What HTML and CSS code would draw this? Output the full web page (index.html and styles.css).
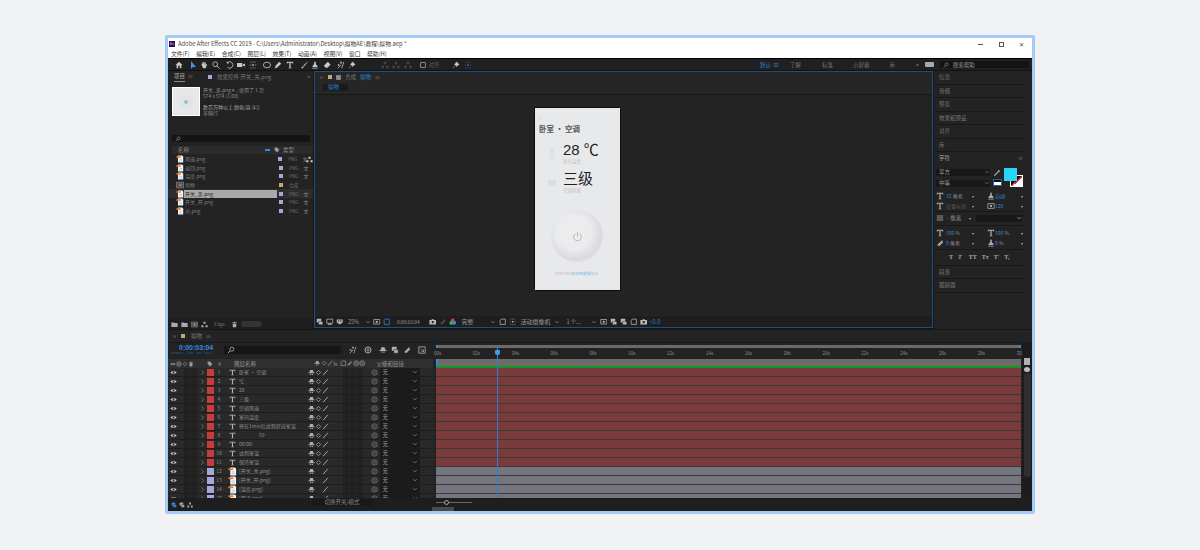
FILE: index.html
```html
<!DOCTYPE html>
<html lang="zh-CN">
<head>
  <meta charset="UTF-8" />
  <meta name="viewport" content="width=device-width, initial-scale=1.0" />
  <title>Adobe After Effects CC 2019</title>
  <link rel="stylesheet" href="styles.css">
</head>
<body>
  <svg class="defs" width="0" height="0">
    <symbol id="i-home" viewBox="0 0 10 10"><path d="M5 1 9.500 5H8v4H6V6H4v3H2V5H.5z" fill="currentColor"/></symbol>
    <symbol id="i-arrow" viewBox="0 0 10 10"><path d="M2.500 0v10l2.300-2.500h4z" fill="currentColor"/></symbol>
    <symbol id="i-hand" viewBox="0 0 10 10"><path d="M2 5V3l1 1V1.500h1V4l.5-3h1v3l.7-2.500h1L7 5l1-1h1L7 9H4z" fill="currentColor"/></symbol>
    <symbol id="i-zoom" viewBox="0 0 10 10"><circle cx="4" cy="4" r="3" fill="none" stroke="currentColor"/><path d="M6 6l3.500 3.500" stroke="currentColor"/></symbol>
    <symbol id="i-rotate" viewBox="0 0 10 10"><path d="M1.500 2.500A4 4 0 1 1 2 8" fill="none" stroke="currentColor"/><path d="M0 1h3v3z" fill="currentColor"/></symbol>
    <symbol id="i-cam" viewBox="0 0 10 10"><path d="M0 2.500h6.500v5H0zM7 4.500 10 3v4L7 5.500z" fill="currentColor"/></symbol>
    <symbol id="i-pan" viewBox="0 0 10 10"><path d="M2 1h1v1H2zM4.500 1h1v1h-1zM7 1h1v1H7zM1 4.500h1v1H1zM4 4h2v2H4zM8 4.500h1v1H8zM2 8h1v1H2zM4.500 8h1v1h-1zM7 8h1v1H7z" fill="currentColor"/></symbol>
    <symbol id="i-ellipse" viewBox="0 0 10 10"><ellipse cx="5" cy="5" rx="4.500" ry="3.500" fill="none" stroke="currentColor"/></symbol>
    <symbol id="i-pen" viewBox="0 0 10 10"><path d="M6.500 1 9 3.500 4 8 1 9l1-3z" fill="currentColor"/></symbol>
    <symbol id="i-t" viewBox="0 0 10 10"><path d="M1 1h8v2.200H8L7.600 2.200H5.800v6L7 8.600V9H3v-.4l1.200-.4v-6H2.400L2 3.200H1z" fill="currentColor"/></symbol>
    <symbol id="i-brush" viewBox="0 0 10 10"><path d="M9.500.5 4 6 5 7 9.800 1zM3.500 6.500C2 7 2.500 8.500 1 9c2 .5 3.500-.5 3.500-1.500z" fill="currentColor"/></symbol>
    <symbol id="i-stamp" viewBox="0 0 10 10"><path d="M4 1h2v3l2 2v1.500H2V6l2-2zM1.500 8.500h7V9.500h-7z" fill="currentColor"/></symbol>
    <symbol id="i-eraser" viewBox="0 0 10 10"><path d="M6 1 9.500 4.500 5.500 8.500h-2L1 6z" fill="currentColor"/></symbol>
    <symbol id="i-puppet" viewBox="0 0 10 10"><path d="M1 9 5 5M8.500 1 6 9" stroke="currentColor" fill="none"/><path d="M1 4h2v2H1zM4 1h2v2H4z" fill="currentColor"/></symbol>
    <symbol id="i-pin" viewBox="0 0 10 10"><path d="M5.500 1 9 4.500 7.500 5 6 7 3 4l2-1.500zM3.500 6.500 1 9" fill="currentColor" stroke="currentColor" stroke-width=".6"/></symbol>
    <symbol id="i-eye" viewBox="0 0 10 10"><path d="M.5 5C2 2.500 8 2.500 9.500 5 8 7.500 2 7.500.5 5z" fill="currentColor"/><circle cx="5" cy="5" r="1.300" fill="#262626"/></symbol>
    <symbol id="i-shy" viewBox="0 0 10 10"><path d="M3 1.500h4l1 3.500h1.500v1.200H.5V5H2zM3 7h1.500v1.500H3zM5.500 7H7v1.500H5.500z" fill="currentColor"/></symbol>
    <symbol id="i-star" viewBox="0 0 10 10"><path d="M5 2 8 5 5 8 2 5z" fill="none" stroke="currentColor"/></symbol>
    <symbol id="i-slash" viewBox="0 0 10 10"><path d="M1.500 9 8.500 1" stroke="currentColor" stroke-width="1.300"/></symbol>
    <symbol id="i-spiral" viewBox="0 0 10 10"><circle cx="5" cy="5" r="3.800" fill="none" stroke="currentColor" stroke-width="1.200"/><circle cx="5" cy="5" r="1.500" fill="none" stroke="currentColor"/></symbol>
    <symbol id="i-chev" viewBox="0 0 10 10"><path d="M2 3.500 5 6.500 8 3.500" fill="none" stroke="currentColor" stroke-width="1.200"/></symbol>
    <symbol id="i-right" viewBox="0 0 10 10"><path d="M3.500 2 6.500 5 3.500 8" fill="none" stroke="currentColor"/></symbol>
    <symbol id="i-png" viewBox="0 0 10 10"><path d="M2.500 .5h5l1.500 1.500v7.500H2.500z" fill="#f4f6fa"/><path d="M.5 1.500h5.500v2H.5z" fill="#ee7a2c"/><path d="M4 5.500h3.500M4 7.500h3.500" stroke="#8fb6dc" stroke-width=".7"/></symbol>
    <symbol id="i-comp" viewBox="0 0 10 10"><path d="M.5 1.500h9v7h-9z" fill="#3a3a3a" stroke="#999" stroke-width=".8"/><path d="M2 3h2v4H2z" fill="#c34"/><path d="M4 3h2v4H4z" fill="#5a5"/><path d="M6 3h2v4H6z" fill="#57c"/></symbol>
    <symbol id="i-net" viewBox="0 0 10 10"><path d="M3.500 1h3v3h-3zM.5 6h3v3h-3zM6.500 6h3v3h-3z" fill="currentColor"/></symbol>
    <symbol id="i-tag" viewBox="0 0 10 10"><path d="M1 1h4l4 4-4 4-4-4z" fill="currentColor"/></symbol>
    <symbol id="i-folder" viewBox="0 0 10 10"><path d="M.5 2h3.500l1 1h4.500v5.500H.5z" fill="currentColor"/></symbol>
    <symbol id="i-trash" viewBox="0 0 10 10"><path d="M1.500 2h7v1h-7zM2.500 3.500h5V9h-5zM4 1h2v1H4z" fill="currentColor"/></symbol>
    <symbol id="i-screen" viewBox="0 0 10 10"><path d="M1 1.500h8v5.500H1zM3 8h4v1H3z" fill="none" stroke="currentColor"/></symbol>
    <symbol id="i-mask" viewBox="0 0 10 10"><path d="M1 2h8v4L5 8.500 1 6z" fill="currentColor"/><circle cx="3.500" cy="4" r="1" fill="#222"/><circle cx="6.500" cy="4" r="1" fill="#222"/></symbol>
    <symbol id="i-layers" viewBox="0 0 10 10"><path d="M1 1h6v5H1z" fill="currentColor"/><path d="M3.500 4.500h5.500V9H3.500z" fill="currentColor" stroke="#222" stroke-width=".6"/></symbol>
    <symbol id="i-frame" viewBox="0 0 10 10"><path d="M3 1.500h5.500v7H1.500V3z" fill="none" stroke="currentColor"/></symbol>
    <symbol id="i-camera" viewBox="0 0 10 10"><path d="M.5 2.500h2.500L4 1.500h2l1 1h2.500v6h-9z" fill="currentColor"/><circle cx="5" cy="5.500" r="1.500" fill="#222"/></symbol>
    <symbol id="i-rgb" viewBox="0 0 10 10"><circle cx="5" cy="3" r="2.500" fill="#e33"/><circle cx="3" cy="6.500" r="2.500" fill="#3b4"/><circle cx="7" cy="6.500" r="2.500" fill="#38e"/></symbol>
    <symbol id="i-grid" viewBox="0 0 10 10"><path d="M1 2h8v6H1z" fill="none" stroke="currentColor"/><circle cx="5" cy="5" r="1.500" fill="currentColor"/></symbol>
    <symbol id="i-search" viewBox="0 0 10 10"><circle cx="6" cy="4" r="2.500" fill="none" stroke="currentColor"/><path d="M4 6 1 9" stroke="currentColor" stroke-width="1.200"/></symbol>
    <symbol id="i-lines" viewBox="0 0 10 10"><path d="M1 2.500h8M1 5h8M1 7.500h8" stroke="currentColor"/></symbol>
    <symbol id="i-drop" viewBox="0 0 10 10"><path d="M7 1l2 2-1 1-.5-.5L3 8 1 9l1-2 4.500-4.500L6 2z" fill="currentColor"/></symbol>
    <symbol id="i-attach" viewBox="0 0 10 10"><path d="M2 8 8 2M3.500 8.500 8.500 3.500" stroke="currentColor" stroke-width="1.500"/></symbol>
    <symbol id="i-box-arrow" viewBox="0 0 10 10"><path d="M1 1h8v8H1z" fill="none" stroke="currentColor"/><path d="M3 3l4 4M7 4v3H4" fill="none" stroke="currentColor" stroke-width=".8"/></symbol>
    <symbol id="i-power" viewBox="0 0 10 10"><path d="M3 2.500a3.500 3.500 0 1 0 4 0M5 1v4" fill="none" stroke="currentColor" stroke-width=".7"/></symbol>
    <symbol id="i-thermo" viewBox="0 0 10 10"><path d="M3.800 1.500a1.200 1.200 0 0 1 2.400 0v4.200a2.200 2.200 0 1 1-2.400 0z" fill="none" stroke="currentColor" stroke-width=".6"/></symbol>
    <symbol id="i-wind" viewBox="0 0 10 10"><path d="M1 2.500h8M1 4.200h8M1 5.900h8M1 7.600h8" stroke="currentColor" stroke-width=".5"/></symbol>
  </svg>

  <div class="window">
    <div class="titlebar">
      <span class="ae-logo">Ae</span>
      <span class="title-text">Adobe After Effects CC 2019 - C:\Users\Administrator\Desktop\拟物AE\教程\拟物.aep *</span>
      <div class="win-btns">
        <span class="win-min"></span>
        <span class="win-max"></span>
        <span class="win-close">✕</span>
      </div>
    </div>
    <div class="menubar">
      <span>文件(F)</span><span>编辑(E)</span><span>合成(C)</span><span>图层(L)</span><span>效果(T)</span><span>动画(A)</span><span>视图(V)</span><span>窗口</span><span>帮助(H)</span>
    </div>

    <div class="toolbar">
      <span class="tool"><svg><use href="#i-home"/></svg></span>
      <span class="tool-sep"></span>
      <span class="tool active"><svg><use href="#i-arrow"/></svg></span>
      <span class="tool"><svg><use href="#i-hand"/></svg></span>
      <span class="tool"><svg><use href="#i-zoom"/></svg></span>
      <span class="tool-sep"></span>
      <span class="tool"><svg><use href="#i-rotate"/></svg></span>
      <span class="tool"><svg><use href="#i-cam"/></svg></span>
      <span class="tool"><svg><use href="#i-pan"/></svg></span>
      <span class="tool-sep"></span>
      <span class="tool"><svg><use href="#i-ellipse"/></svg></span>
      <span class="tool"><svg><use href="#i-pen"/></svg></span>
      <span class="tool"><svg><use href="#i-t"/></svg></span>
      <span class="tool-sep"></span>
      <span class="tool"><svg><use href="#i-brush"/></svg></span>
      <span class="tool"><svg><use href="#i-stamp"/></svg></span>
      <span class="tool"><svg><use href="#i-eraser"/></svg></span>
      <span class="tool-sep"></span>
      <span class="tool"><svg><use href="#i-puppet"/></svg></span>
      <span class="tool"><svg><use href="#i-pin"/></svg></span>
      <span class="align-group">
        <span class="tool dim"><svg><use href="#i-net"/></svg></span>
        <span class="tool dim"><svg><use href="#i-net"/></svg></span>
        <span class="tool dim"><svg><use href="#i-net"/></svg></span>
        <span class="align-check"></span>
        <span class="dim-text">对齐</span>
        <span class="tool"><svg><use href="#i-pin"/></svg></span>
        <span class="tool blue"><svg><use href="#i-pan"/></svg></span>
      </span>
      <div class="workspaces">
        <span class="ws-active">默认</span>
        <svg class="ws-menu"><use href="#i-lines"/></svg>
        <span class="ws ws-learn">了解</span>
        <span class="ws ws-std">标准</span>
        <span class="ws ws-small">小屏幕</span>
        <span class="ws ws-lib">库</span>
        <span class="ws-more">»</span>
        <span class="ws-help"></span>
        <div class="help-search"><svg><use href="#i-search"/></svg>搜索帮助</div>
      </div>
    </div>

    <div class="main">
      <section class="project">
        <div class="panel-tabs">
          <span class="tab-active">项目</span>
          <svg class="tab-menu"><use href="#i-lines"/></svg>
          <span class="swatch-lilac tab-swatch"></span>
          <span class="tab-dim">效果控件 开关_关.png</span>
          <span class="tab-more">»</span>
        </div>
        <div class="asset-info">
          <div class="thumb"><span class="thumb-dial"></span></div>
          <div class="asset-meta">
            <p>开关_美.png ▾ , 使用了 1 次</p>
            <p>574 x 574 (1.00)</p>
            <p class="meta-gap">数百万种以上 颜色(直 (Ł))</p>
            <p>非隔行</p>
          </div>
        </div>
        <div class="project-search"><svg><use href="#i-search"/></svg></div>
        <div class="proj-head">
          <span class="proj-name">名称</span>
          <span class="sort-mark"></span>
          <svg class="proj-tag"><use href="#i-tag"/></svg>
          <span>类型</span>
        </div>
        <div class="proj-row">
          <svg class="file"><use href="#i-png"/></svg><span class="proj-label">风速.png</span><span class="swatch-lilac"></span><span class="proj-type">PNG</span><span class="proj-kind">文</span><svg class="net"><use href="#i-net"/></svg>
        </div>
        <div class="proj-row">
          <svg class="file"><use href="#i-png"/></svg><span class="proj-label">返回.png</span><span class="swatch-lilac"></span><span class="proj-type">PNG</span><span class="proj-kind">文</span>
        </div>
        <div class="proj-row">
          <svg class="file"><use href="#i-png"/></svg><span class="proj-label">温度.png</span><span class="swatch-lilac"></span><span class="proj-type">PNG</span><span class="proj-kind">文</span>
        </div>
        <div class="proj-row">
          <svg class="file"><use href="#i-comp"/></svg><span class="proj-label">拟物</span><span class="swatch-tan"></span><span class="proj-type">合成</span>
        </div>
        <div class="proj-row selected">
          <svg class="file"><use href="#i-png"/></svg><span class="proj-label">开关_美.png</span><span class="swatch-lilac"></span><span class="proj-type">PNG</span><span class="proj-kind">文</span>
        </div>
        <div class="proj-row">
          <svg class="file"><use href="#i-png"/></svg><span class="proj-label">开关_开.png</span><span class="swatch-lilac"></span><span class="proj-type">PNG</span><span class="proj-kind">文</span>
        </div>
        <div class="proj-row">
          <svg class="file"><use href="#i-png"/></svg><span class="proj-label">亮.png</span><span class="swatch-lilac"></span><span class="proj-type">PNG</span><span class="proj-kind">文</span>
        </div>
        <div class="proj-foot">
          <svg><use href="#i-folder"/></svg>
          <svg><use href="#i-folder"/></svg>
          <svg><use href="#i-comp"/></svg>
          <svg><use href="#i-net"/></svg>
          <span class="bpc">8 bpc</span>
          <svg><use href="#i-trash"/></svg>
          <span class="foot-pill"></span>
        </div>
      </section>

      <section class="comp">
        <div class="comp-tabs">
          <span class="comp-x">×</span>
          <span class="swatch-tan"></span>
          <span class="comp-lock">🔓︎</span>
          <span class="tab-dim">合成</span>
          <span class="blue-text">拟物</span>
          <svg class="tab-menu"><use href="#i-lines"/></svg>
        </div>
        <div class="comp-sub"><span class="sub-tab">拟物</span></div>
        <div class="viewer">
          <div class="artboard">
            <div class="art-back">‹</div>
            <div class="art-title">卧室 · 空调</div>
            <div class="art-stat">
              <svg class="art-icon"><use href="#i-thermo"/></svg>
              <div>
                <div class="art-value">28 ℃</div>
                <div class="art-label">室内温度</div>
              </div>
            </div>
            <div class="art-stat art-stat-2">
              <svg class="art-icon"><use href="#i-wind"/></svg>
              <div>
                <div class="art-value">三级</div>
                <div class="art-label">空调风速</div>
              </div>
            </div>
            <div class="dial"><svg><use href="#i-power"/></svg></div>
            <div class="art-note">将在1min<span>后达到舒适</span>室温</div>
          </div>
        </div>
        <div class="comp-foot">
          <svg class="cf-first"><use href="#i-layers"/></svg>
          <svg><use href="#i-screen"/></svg>
          <svg><use href="#i-mask"/></svg>
          <span class="cf-zoom">25%</span>
          <svg class="cf-chev"><use href="#i-chev"/></svg>
          <svg><use href="#i-grid"/></svg>
          <svg class="blue"><use href="#i-frame"/></svg>
          <span class="cf-time">0:00:03:04</span>
          <svg><use href="#i-camera"/></svg>
          <svg class="cf-dim"><use href="#i-attach"/></svg>
          <svg><use href="#i-rgb"/></svg>
          <span class="cf-quality">完整</span>
          <svg class="cf-chev"><use href="#i-chev"/></svg>
          <svg><use href="#i-frame"/></svg>
          <svg><use href="#i-pan"/></svg>
          <span class="cf-camera">活动摄像机</span>
          <svg class="cf-chev"><use href="#i-chev"/></svg>
          <span class="cf-views">1 个...</span>
          <svg class="cf-chev"><use href="#i-chev"/></svg>
          <svg><use href="#i-grid"/></svg>
          <svg><use href="#i-layers"/></svg>
          <svg><use href="#i-layers"/></svg>
          <svg><use href="#i-frame"/></svg>
          <svg><use href="#i-camera"/></svg>
          <span class="blue-text">+0.0</span>
        </div>
      </section>

      <aside class="side">
        <div class="side-item">信息</div>
        <div class="side-item">音频</div>
        <div class="side-item">预览</div>
        <div class="side-item">效果和预设</div>
        <div class="side-item">对齐</div>
        <div class="side-item">库</div>
        <div class="side-item side-open">字符<svg class="tab-menu"><use href="#i-lines"/></svg></div>
        <div class="char-fonts">
          <div class="char-selects">
            <div class="char-select">苹方<svg><use href="#i-chev"/></svg></div>
            <div class="char-select">中等<svg><use href="#i-chev"/></svg></div>
          </div>
          <div class="color-tools">
            <svg class="drop"><use href="#i-drop"/></svg>
            <span class="mini-swatch"></span>
          </div>
          <div class="color-pair">
            <span class="stroke-color"></span>
            <span class="fill-color"></span>
          </div>
        </div>
        <div class="char-grid">
          <svg><use href="#i-t"/></svg><span class="val"><b>32</b> 像素</span><i>▾</i>
          <svg><use href="#i-stamp"/></svg><span class="val"><b>自动</b></span><i>▾</i>
          <svg><use href="#i-t"/></svg><span class="val muted">度量标准</span><i>▾</i>
          <svg><use href="#i-grid"/></svg><span class="val"><b>120</b></span><i>▾</i>
        </div>
        <div class="char-stroke">
          <svg><use href="#i-lines"/></svg>
          <span>- 像素</span><i>▾</i>
          <span class="stroke-select"><svg><use href="#i-chev"/></svg></span>
        </div>
        <div class="char-grid char-grid-2">
          <svg><use href="#i-t"/></svg><span class="val"><b>100</b> %</span><i>▾</i>
          <svg><use href="#i-t"/></svg><span class="val"><b>100</b> %</span><i>▾</i>
          <svg><use href="#i-attach"/></svg><span class="val"><b>0</b> 像素</span><i>▾</i>
          <svg><use href="#i-stamp"/></svg><span class="val"><b>0</b> %</span><i>▾</i>
        </div>
        <div class="char-styles">
          <b>T</b><em>T</em><b>TT</b><b>Tт</b><b>T'</b><b>T,</b>
        </div>
        <div class="side-item">段落</div>
        <div class="side-item">跟踪器</div>
      </aside>
    </div>

    <section class="timeline">
      <div class="tl-tabs">
        <span class="comp-x">×</span>
        <span class="swatch-tan"></span>
        <span class="tab-dim tl-name">拟物</span>
        <svg class="tab-menu"><use href="#i-lines"/></svg>
      </div>
      <div class="tl-body">
        <div class="tl-left">
          <div class="tl-time">
            <div class="time-box">
              <div class="time-code">0:00:03:04</div>
              <div class="time-fps">00094 (30.00 fps)</div>
            </div>
            <div class="tl-search"><svg><use href="#i-search"/></svg></div>
            <svg class="tt-1"><use href="#i-puppet"/></svg>
            <svg class="tt-2"><use href="#i-spiral"/></svg>
            <svg class="tt-3"><use href="#i-shy"/></svg>
            <svg class="tt-4"><use href="#i-layers"/></svg>
            <svg class="tt-5"><use href="#i-attach"/></svg>
            <svg class="tt-6"><use href="#i-box-arrow"/></svg>
          </div>
          <div class="col-head">
            <svg class="ch-i"><use href="#i-eye"/></svg>
            <svg class="ch-i"><use href="#i-spiral"/></svg>
            <svg class="ch-i"><use href="#i-star"/></svg>
            <svg class="ch-i"><use href="#i-trash"/></svg>
            <svg class="ch-tag"><use href="#i-tag"/></svg>
            <span class="ch-hash">#</span>
            <span class="ch-name">图层名称</span>
            <svg class="ch-s"><use href="#i-shy"/></svg>
            <svg class="ch-s"><use href="#i-star"/></svg>
            <svg class="ch-s"><use href="#i-slash"/></svg>
            <span class="ch-fx">fx</span>
            <svg class="ch-s"><use href="#i-frame"/></svg>
            <svg class="ch-s"><use href="#i-attach"/></svg>
            <svg class="ch-s"><use href="#i-spiral"/></svg>
            <svg class="ch-s"><use href="#i-spiral"/></svg>
            <span class="ch-parent">父级和链接</span>
          </div>
          <div class="layer"><svg class="l-eye"><use href="#i-eye"/></svg><span class="l-box"></span><span class="l-box"></span><svg class="l-arrow"><use href="#i-right"/></svg><span class="l-red"></span><span class="l-num">1</span><svg class="l-type"><use href="#i-t"/></svg><span class="l-name">卧室 · 空调</span><svg class="l-s"><use href="#i-shy"/></svg><svg class="l-s"><use href="#i-star"/></svg><svg class="l-s"><use href="#i-slash"/></svg><span class="l-box l-box-a"></span><span class="l-box"></span><span class="l-box"></span><svg class="l-spiral"><use href="#i-spiral"/></svg><span class="l-select">无<svg><use href="#i-chev"/></svg></span></div>
          <div class="layer"><svg class="l-eye"><use href="#i-eye"/></svg><span class="l-box"></span><span class="l-box"></span><svg class="l-arrow"><use href="#i-right"/></svg><span class="l-red"></span><span class="l-num">2</span><svg class="l-type"><use href="#i-t"/></svg><span class="l-name">℃</span><svg class="l-s"><use href="#i-shy"/></svg><svg class="l-s"><use href="#i-star"/></svg><svg class="l-s"><use href="#i-slash"/></svg><span class="l-box l-box-a"></span><span class="l-box"></span><span class="l-box"></span><svg class="l-spiral"><use href="#i-spiral"/></svg><span class="l-select">无<svg><use href="#i-chev"/></svg></span></div>
          <div class="layer"><svg class="l-eye"><use href="#i-eye"/></svg><span class="l-box"></span><span class="l-box"></span><svg class="l-arrow"><use href="#i-right"/></svg><span class="l-red"></span><span class="l-num">3</span><svg class="l-type"><use href="#i-t"/></svg><span class="l-name">28</span><svg class="l-s"><use href="#i-shy"/></svg><svg class="l-s"><use href="#i-star"/></svg><svg class="l-s"><use href="#i-slash"/></svg><span class="l-box l-box-a"></span><span class="l-box"></span><span class="l-box"></span><svg class="l-spiral"><use href="#i-spiral"/></svg><span class="l-select">无<svg><use href="#i-chev"/></svg></span></div>
          <div class="layer"><svg class="l-eye"><use href="#i-eye"/></svg><span class="l-box"></span><span class="l-box"></span><svg class="l-arrow"><use href="#i-right"/></svg><span class="l-red"></span><span class="l-num">4</span><svg class="l-type"><use href="#i-t"/></svg><span class="l-name">三级</span><svg class="l-s"><use href="#i-shy"/></svg><svg class="l-s"><use href="#i-star"/></svg><svg class="l-s"><use href="#i-slash"/></svg><span class="l-box l-box-a"></span><span class="l-box"></span><span class="l-box"></span><svg class="l-spiral"><use href="#i-spiral"/></svg><span class="l-select">无<svg><use href="#i-chev"/></svg></span></div>
          <div class="layer"><svg class="l-eye"><use href="#i-eye"/></svg><span class="l-box"></span><span class="l-box"></span><svg class="l-arrow"><use href="#i-right"/></svg><span class="l-red"></span><span class="l-num">5</span><svg class="l-type"><use href="#i-t"/></svg><span class="l-name">空调风速</span><svg class="l-s"><use href="#i-shy"/></svg><svg class="l-s"><use href="#i-star"/></svg><svg class="l-s"><use href="#i-slash"/></svg><span class="l-box l-box-a"></span><span class="l-box"></span><span class="l-box"></span><svg class="l-spiral"><use href="#i-spiral"/></svg><span class="l-select">无<svg><use href="#i-chev"/></svg></span></div>
          <div class="layer"><svg class="l-eye"><use href="#i-eye"/></svg><span class="l-box"></span><span class="l-box"></span><svg class="l-arrow"><use href="#i-right"/></svg><span class="l-red"></span><span class="l-num">6</span><svg class="l-type"><use href="#i-t"/></svg><span class="l-name">室内温度</span><svg class="l-s"><use href="#i-shy"/></svg><svg class="l-s"><use href="#i-star"/></svg><svg class="l-s"><use href="#i-slash"/></svg><span class="l-box l-box-a"></span><span class="l-box"></span><span class="l-box"></span><svg class="l-spiral"><use href="#i-spiral"/></svg><span class="l-select">无<svg><use href="#i-chev"/></svg></span></div>
          <div class="layer"><svg class="l-eye"><use href="#i-eye"/></svg><span class="l-box"></span><span class="l-box"></span><svg class="l-arrow"><use href="#i-right"/></svg><span class="l-red"></span><span class="l-num">7</span><svg class="l-type"><use href="#i-t"/></svg><span class="l-name">将在1min后达到舒适室温</span><svg class="l-s"><use href="#i-shy"/></svg><svg class="l-s"><use href="#i-star"/></svg><svg class="l-s"><use href="#i-slash"/></svg><span class="l-box l-box-a"></span><span class="l-box"></span><span class="l-box"></span><svg class="l-spiral"><use href="#i-spiral"/></svg><span class="l-select">无<svg><use href="#i-chev"/></svg></span></div>
          <div class="layer"><svg class="l-eye"><use href="#i-eye"/></svg><span class="l-box"></span><span class="l-box"></span><svg class="l-arrow"><use href="#i-right"/></svg><span class="l-red"></span><span class="l-num">8</span><svg class="l-type"><use href="#i-t"/></svg><span class="l-name l-name-59">59</span><svg class="l-s"><use href="#i-shy"/></svg><svg class="l-s"><use href="#i-star"/></svg><svg class="l-s"><use href="#i-slash"/></svg><span class="l-box l-box-a"></span><span class="l-box"></span><span class="l-box"></span><svg class="l-spiral"><use href="#i-spiral"/></svg><span class="l-select">无<svg><use href="#i-chev"/></svg></span></div>
          <div class="layer"><svg class="l-eye"><use href="#i-eye"/></svg><span class="l-box"></span><span class="l-box"></span><svg class="l-arrow"><use href="#i-right"/></svg><span class="l-red"></span><span class="l-num">9</span><svg class="l-type"><use href="#i-t"/></svg><span class="l-name">00:00:</span><svg class="l-s"><use href="#i-shy"/></svg><svg class="l-s"><use href="#i-star"/></svg><svg class="l-s"><use href="#i-slash"/></svg><span class="l-box l-box-a"></span><span class="l-box"></span><span class="l-box"></span><svg class="l-spiral"><use href="#i-spiral"/></svg><span class="l-select">无<svg><use href="#i-chev"/></svg></span></div>
          <div class="layer"><svg class="l-eye"><use href="#i-eye"/></svg><span class="l-box"></span><span class="l-box"></span><svg class="l-arrow"><use href="#i-right"/></svg><span class="l-red"></span><span class="l-num">10</span><svg class="l-type"><use href="#i-t"/></svg><span class="l-name">达到室温</span><svg class="l-s"><use href="#i-shy"/></svg><svg class="l-s"><use href="#i-star"/></svg><svg class="l-s"><use href="#i-slash"/></svg><span class="l-box l-box-a"></span><span class="l-box"></span><span class="l-box"></span><svg class="l-spiral"><use href="#i-spiral"/></svg><span class="l-select">无<svg><use href="#i-chev"/></svg></span></div>
          <div class="layer"><svg class="l-eye"><use href="#i-eye"/></svg><span class="l-box"></span><span class="l-box"></span><svg class="l-arrow"><use href="#i-right"/></svg><span class="l-red"></span><span class="l-num">11</span><svg class="l-type"><use href="#i-t"/></svg><span class="l-name">保持室温</span><svg class="l-s"><use href="#i-shy"/></svg><svg class="l-s"><use href="#i-star"/></svg><svg class="l-s"><use href="#i-slash"/></svg><span class="l-box l-box-a"></span><span class="l-box"></span><span class="l-box"></span><svg class="l-spiral"><use href="#i-spiral"/></svg><span class="l-select">无<svg><use href="#i-chev"/></svg></span></div>
          <div class="layer"><svg class="l-eye"><use href="#i-eye"/></svg><span class="l-box"></span><span class="l-box"></span><svg class="l-arrow"><use href="#i-right"/></svg><span class="l-lilac"></span><span class="l-num">12</span><svg class="l-type l-png"><use href="#i-png"/></svg><span class="l-name">[开关_关.png]</span><svg class="l-s"><use href="#i-shy"/></svg><span class="l-s"></span><svg class="l-s"><use href="#i-slash"/></svg><span class="l-box l-box-a"></span><span class="l-box"></span><span class="l-box"></span><svg class="l-spiral"><use href="#i-spiral"/></svg><span class="l-select">无<svg><use href="#i-chev"/></svg></span></div>
          <div class="layer"><svg class="l-eye"><use href="#i-eye"/></svg><span class="l-box"></span><span class="l-box"></span><svg class="l-arrow"><use href="#i-right"/></svg><span class="l-lilac"></span><span class="l-num">13</span><svg class="l-type l-png"><use href="#i-png"/></svg><span class="l-name">[开关_开.png]</span><svg class="l-s"><use href="#i-shy"/></svg><span class="l-s"></span><svg class="l-s"><use href="#i-slash"/></svg><span class="l-box l-box-a"></span><span class="l-box"></span><span class="l-box"></span><svg class="l-spiral"><use href="#i-spiral"/></svg><span class="l-select">无<svg><use href="#i-chev"/></svg></span></div>
          <div class="layer"><svg class="l-eye"><use href="#i-eye"/></svg><span class="l-box"></span><span class="l-box"></span><svg class="l-arrow"><use href="#i-right"/></svg><span class="l-lilac"></span><span class="l-num">14</span><svg class="l-type l-png"><use href="#i-png"/></svg><span class="l-name">[温度.png]</span><svg class="l-s"><use href="#i-shy"/></svg><span class="l-s"></span><svg class="l-s"><use href="#i-slash"/></svg><span class="l-box l-box-a"></span><span class="l-box"></span><span class="l-box"></span><svg class="l-spiral"><use href="#i-spiral"/></svg><span class="l-select">无<svg><use href="#i-chev"/></svg></span></div>
          <div class="layer"><svg class="l-eye"><use href="#i-eye"/></svg><span class="l-box"></span><span class="l-box"></span><svg class="l-arrow"><use href="#i-right"/></svg><span class="l-lilac"></span><span class="l-num">15</span><svg class="l-type l-png"><use href="#i-png"/></svg><span class="l-name">[风速.png]</span><svg class="l-s"><use href="#i-shy"/></svg><span class="l-s"></span><svg class="l-s"><use href="#i-slash"/></svg><span class="l-box l-box-a"></span><span class="l-box"></span><span class="l-box"></span><svg class="l-spiral"><use href="#i-spiral"/></svg><span class="l-select">无<svg><use href="#i-chev"/></svg></span></div>
        </div>

        <div class="tl-right">
          <div class="ruler">
            <div class="ruler-bar"></div>
            <div class="ruler-labels">
              <span>00s</span><span>02s</span><span>04s</span><span>06s</span><span>08s</span><span>10s</span><span>12s</span><span>14s</span><span>16s</span><span>18s</span><span>20s</span><span>22s</span><span>24s</span><span>26s</span><span>28s</span><span>30s</span>
            </div>
          </div>
          <div class="work-bar"></div>
          <div class="green-bar"></div>
          <div class="tracks">
            <div class="track red"></div><div class="track red"></div><div class="track red"></div><div class="track red"></div>
            <div class="track red"></div><div class="track red"></div><div class="track red"></div><div class="track red"></div>
            <div class="track red"></div><div class="track red"></div><div class="track red"></div>
            <div class="track gray"></div><div class="track gray"></div><div class="track gray"></div><div class="track gray"></div>
          </div>
          <div class="playhead"><span class="playhead-cap"></span></div>
        </div>

        <div class="tl-scroll">
          <span class="scroll-top"></span>
          <span class="scroll-top2"></span>
          <span class="scroll-thumb"></span>
        </div>
      </div>
      <div class="tl-foot">
        <svg class="blue"><use href="#i-layers"/></svg>
        <svg><use href="#i-layers"/></svg>
        <svg><use href="#i-net"/></svg>
        <span class="mode-toggle">切换开关/模式</span>
        <span class="zoom-slider"><i class="zoom-knob"></i></span>
        <span class="tl-thumb"></span>
      </div>
    </section>
  </div>
</body>
</html>
```

FILE: styles.css
```css
* {
  box-sizing: border-box;
}
html, body {
  height: 100%;
}
body {
  margin: 0;
  padding: 35px 165px 0;
  background: #f1f2f4;
  font-family: "Noto Sans CJK SC", "Noto Sans", sans-serif;
  overflow: hidden;
}
p {
  margin: 0;
}
svg {
  display: block;
  width: 8px;
  height: 8px;
  flex: none;
}
i, em {
  font-style: normal;
}
.defs {
  position: absolute;
}
.window {
  width: 870px;
  height: 479px;
  border: 3px solid #a4caf8;
  border-radius: 2px;
  background: #161616;
  display: flex;
  flex-direction: column;
  overflow: hidden;
  color: #8d8d8d;
  font-size: 5.5px;
  line-height: 8px;
}

/* title and menu */
.titlebar {
  height: 12px;
  background: #fff;
  display: flex;
  align-items: center;
  padding-left: 1px;
  color: #444;
  flex: none;
}
.ae-logo {
  width: 6px;
  height: 6px;
  margin-right: 3px;
  background: #2a0d54;
  color: #b79cf0;
  font: 4px/6px "Liberation Sans", sans-serif;
  text-align: center;
}
.title-text {
  font-size: 5.800px;
  white-space: nowrap;
}
.win-btns {
  margin-left: auto;
  display: flex;
  align-items: center;
  padding-right: 8px;
  padding-top: 1px;
}
.win-min {
  width: 5px;
  height: 1px;
  background: #555;
  margin-right: 16px;
}
.win-max {
  width: 5px;
  height: 5px;
  border: 1px solid #555;
  margin-right: 15px;
}
.win-close {
  font-size: 6px;
  color: #444;
}
.menubar {
  height: 8px;
  background: #fff;
  display: flex;
  gap: 6.500px;
  padding-left: 3px;
  color: #333;
  font-size: 5.800px;
  flex: none;
}
.toolbar {
  height: 13px;
  background: #202020;
  border-top: 1px solid #000;
  border-bottom: 1px solid #111;
  display: flex;
  align-items: center;
  padding-left: 5px;
  color: #c8c8c8;
  flex: none;
  position: relative;
}
.tool {
  width: 11.500px;
  display: flex;
  justify-content: center;
}
.tool.active {
  color: #3f93ea;
}
.tool.dim {
  color: #444;
}
.tool.blue {
  color: #2c70b8;
}
.tool-sep {
  width: 2.500px;
}
.align-group {
  display: flex;
  align-items: center;
  margin-left: 21px;
}
.align-check {
  width: 6px;
  height: 6px;
  margin-left: 6px;
  border: 1px solid #888;
  border-radius: 1px;
}
.dim-text {
  margin-left: 3px;
  color: #666;
  width: 22px;
}
.workspaces {
  position: absolute;
  left: 592px;
  top: 0;
  height: 11px;
  right: 3px;
  display: flex;
  align-items: center;
  color: #777;
}
.ws-active {
  color: #2f7fcd;
  width: 13px;
}
.ws-menu {
  color: #2f7fcd;
  width: 6px;
  height: 6px;
}
.ws-learn {
  margin-left: 11px;
}
.ws-std {
  margin-left: 21px;
}
.ws-small {
  margin-left: 20px;
}
.ws-lib {
  margin-left: 20px;
}
.ws-more {
  margin-left: 21px;
  color: #bbb;
}
.ws-help {
  width: 9px;
  height: 5px;
  margin-left: 6px;
  background: #aaa;
  border-radius: 1px;
}
.help-search {
  margin-left: 6px;
  flex: 1;
  height: 7px;
  background: #141414;
  display: flex;
  align-items: center;
  gap: 4px;
  padding-left: 3px;
  color: #9a9a9a;
}
.help-search svg {
  width: 6px;
  height: 6px;
}

/* panels */
.main {
  height: 258px;
  display: flex;
  gap: 1px;
  flex: none;
}
.panel-tabs, .comp-tabs {
  height: 11px;
  display: flex;
  align-items: center;
  flex: none;
}
.tab-menu {
  width: 5px;
  height: 5px;
  color: #666;
  margin-left: 3px;
}
.tab-dim {
  color: #777;
}
.blue-text {
  color: #2f7fcd;
}
.swatch-lilac, .swatch-tan {
  width: 4px;
  height: 4px;
  flex: none;
}
.swatch-lilac {
  background: #a9a6d8;
}
.swatch-tan {
  background: #c6a878;
}

/* project panel */
.project {
  width: 145px;
  background: #232323;
  display: flex;
  flex-direction: column;
}
.panel-tabs {
  padding-left: 6px;
  margin-bottom: 5px;
}
.tab-active {
  color: #aaa;
  border-bottom: 1px solid #888;
  padding: 0 0 1px;
}
.tab-swatch {
  margin-left: 15px;
  margin-right: 5px;
}
.tab-more {
  margin-left: auto;
  margin-right: 3px;
  color: #aaa;
}
.asset-info {
  height: 48px;
  display: flex;
  padding-left: 4px;
  flex: none;
}
.thumb {
  width: 28px;
  height: 29px;
  background: #e6e7e9;
  border: 1px solid #fff;
  display: flex;
  align-items: center;
  justify-content: center;
  margin-right: 3px;
}
.thumb-dial {
  width: 14px;
  height: 14px;
  border-radius: 50%;
  background: radial-gradient(circle, #7cc6e6 0 1.500px, #e0e1e3 2px, #e6e7e9);
}
.asset-meta {
  font-size: 5px;
  line-height: 6px;
  color: #8f8f8f;
  padding-top: 0;
}
.meta-gap {
  margin-top: 5px;
  color: #a5a5a5;
}
.project-search {
  height: 7px;
  margin: 0 3px 4px 4px;
  background: #141414;
  padding: 0 0 0 3px;
  display: flex;
  align-items: center;
  color: #999;
  flex: none;
}
.project-search svg, .tl-search svg {
  width: 6px;
  height: 6px;
}
.proj-head {
  height: 8px;
  margin: 0 0 0 4px;
  background: #2b2b2b;
  display: flex;
  align-items: center;
  color: #8a8a8a;
  flex: none;
  margin-bottom: 1px;
}
.proj-name {
  margin-left: 6px;
  width: 87px;
}
.sort-mark {
  width: 5px;
  height: 2px;
  background: #2f8ae6;
  margin-right: 4px;
}
.proj-tag {
  width: 6px;
  height: 6px;
  margin-right: 3px;
  color: #999;
}
.proj-row {
  height: 8.600px;
  display: flex;
  align-items: center;
  padding-left: 8px;
  flex: none;
  font-size: 5px;
  color: #7e7e7e;
}
.file {
  width: 8px;
  height: 8px;
}
.proj-label {
  width: 93px;
  padding-left: 1px;
  margin-right: 2px;
  height: 8px;
  white-space: nowrap;
}
.proj-row.selected .proj-label {
  background: #a9a9a9;
  color: #222;
}
.proj-row.selected {
  background: #2e2e2e;
}
.proj-type {
  margin-left: 6px;
  width: 14.500px;
  font-size: 4.500px;
  color: #707070;
}
.proj-kind {
  width: 7px;
  color: #888;
}
.net {
  width: 7px;
  height: 7px;
  margin-left: -3.500px;
  color: #ccc;
}
.proj-foot {
  margin-top: auto;
  height: 10px;
  display: flex;
  align-items: center;
  gap: 3px;
  padding-left: 3px;
  color: #aaa;
  background: #1e1e1e;
  flex: none;
}
.proj-foot svg {
  width: 7px;
  height: 7px;
}
.bpc {
  margin: 0 3px;
  font-size: 4.500px;
  color: #777;
}
.foot-pill {
  width: 21px;
  height: 6px;
  border-radius: 3px;
  background: #333;
}

/* composition panel */
.comp {
  width: 619px;
  height: 257px;
  border: 1px solid #1d4f84;
  background: #232323;
  display: flex;
  flex-direction: column;
}
.comp-tabs {
  height: 10px;
  padding-left: 4px;
  gap: 4px;
  background: #262626;
}
.comp-tabs .tab-menu {
  margin-left: 0;
}
.comp-x {
  color: #888;
  font-size: 5px;
}
.comp-lock {
  width: 5px;
  height: 5px;
  background: #888;
  border-radius: 1px;
  overflow: hidden;
  color: transparent;
  font-size: 1px;
}
.comp-sub {
  height: 13px;
  padding: 2px 0 0 8px;
  background: #262626;
  border-bottom: 1px solid #161616;
  flex: none;
}
.sub-tab {
  display: block;
  width: 25px;
  height: 7px;
  line-height: 7px;
  background: #1b1b1b;
  color: #2f7fcd;
  padding-left: 5px;
}
.viewer {
  flex: 1;
  padding: 13px 0 0 220px;
}
.artboard {
  width: 85px;
  height: 182px;
  background: #e8e9eb;
  box-shadow: -1px -1px 0 #0c0c0c, 1px 1px 0 #0c0c0c;
  color: #333;
  padding: 5px 0 0 4px;
  display: flex;
  flex-direction: column;
  position: relative;
}
.art-back {
  font-size: 7px;
  line-height: 8px;
  color: #bbb;
}
.art-title {
  margin-top: 3px;
  font-size: 7.500px;
  line-height: 10px;
  font-weight: 700;
  color: #555;
  white-space: nowrap;
}
.art-stat {
  margin-top: 7px;
  margin-left: 8px;
  display: flex;
  align-items: flex-start;
  gap: 6px;
  color: #c4c4c4;
}
.art-stat-2 {
  margin-top: 6px;
}
.art-icon {
  width: 10px;
  height: 10px;
  margin-top: 8px;
}
.art-value {
  font: 15px/17px "Liberation Sans", "Noto Sans CJK SC", sans-serif;
  color: #1e1e1e;
  white-space: nowrap;
}
.art-label {
  font-size: 4.500px;
  line-height: 6px;
  color: #c2c2c2;
}
.dial {
  width: 52px;
  height: 52px;
  margin: 17px 0 0 12px;
  border-radius: 50%;
  background: radial-gradient(circle at 44% 42%, #ededee 0, #eaebed 42%, #dadadc 66%, #e8e9eb 86%);
  display: flex;
  align-items: center;
  justify-content: center;
  color: #a8a8a8;
}
.dial svg {
  width: 11px;
  height: 11px;
}
.art-note {
  margin: 9px 0 0 16px;
  font-size: 3.800px;
  line-height: 6px;
  color: #bbb;
  white-space: nowrap;
}
.art-note span {
  color: #5ab8e8;
}
.comp-foot {
  height: 11px;
  background: #1e1e1e;
  display: flex;
  align-items: center;
  gap: 2.500px;
  padding-left: 1px;
  color: #b8b8b8;
  flex: none;
}
.comp-foot svg {
  width: 7.500px;
  height: 7.500px;
}
.comp-foot .cf-chev {
  width: 6px;
  height: 6px;
  color: #888;
}
.comp-foot .blue {
  color: #2f8ae6;
}
.comp-foot .cf-dim {
  color: #444;
}
.cf-zoom {
  width: 14px;
  margin-left: 2px;
  color: #999;
}
.cf-time {
  width: 27px;
  margin: 0 2px 0 4px;
  font-size: 4.800px;
  color: #999;
}
.cf-quality {
  width: 26px;
  margin-left: 3px;
  color: #999;
  font-size: 6px;
}
.cf-camera {
  width: 31px;
  margin-left: 2px;
  color: #999;
  font-size: 6px;
  white-space: nowrap;
}
.cf-views {
  width: 22px;
  margin-left: 4px;
  color: #999;
}

/* right side panels */
.side {
  width: 98px;
  padding: 0 6px 0 1px;
  background: #232323;
  display: flex;
  flex-direction: column;
}
.side-item {
  height: 13.500px;
  line-height: 13px;
  padding-left: 4px;
  border-bottom: 1px solid #181818;
  color: #7a7a7a;
  flex: none;
}
.side-open {
  color: #aaa;
  border-bottom: 0;
  display: flex;
  align-items: center;
  justify-content: space-between;
  padding-right: 3px;
}
.char-fonts {
  display: flex;
  height: 23px;
  flex: none;
}
.char-selects {
  width: 55px;
  display: flex;
  flex-direction: column;
  gap: 4px;
  padding-top: 3px;
  padding-left: 1px;
}
.char-select {
  height: 7px;
  width: 54px;
  line-height: 7px;
  background: #181818;
  color: #999;
  padding-left: 3px;
  display: flex;
  align-items: center;
  justify-content: space-between;
}
.char-select svg {
  width: 6px;
  height: 6px;
  color: #777;
}
.color-tools {
  width: 10px;
  margin-left: 2px;
  display: flex;
  flex-direction: column;
  align-items: center;
  gap: 2px;
  padding-top: 3px;
}
.drop {
  color: #aaa;
}
.mini-swatch {
  width: 9px;
  height: 7px;
  background: linear-gradient(#111 0 45%, #fff 45%);
  border: 1px solid #2a5d94;
}
.color-pair {
  position: relative;
  width: 20px;
  height: 20px;
  margin: 2px 0 0 2px;
}
.stroke-color {
  position: absolute;
  left: 6px;
  top: 7px;
  width: 13px;
  height: 12px;
  background: linear-gradient(to top left, #fff 42%, #d33 42% 52%, #111 52%);
  border: 1px solid #fff;
}
.fill-color {
  position: absolute;
  left: 0;
  top: 0;
  width: 13px;
  height: 13px;
  background: #2ad4f8;
}
.char-grid {
  display: grid;
  grid-template-columns: 10px 26px 15px 8px 26px 8px;
  grid-auto-rows: 9.500px;
  align-items: center;
  padding: 3px 0 0 1px;
  border-bottom: 1px solid #181818;
  height: 23px;
  flex: none;
}
.char-grid svg {
  color: #aaa;
}
.char-grid i, .char-stroke i {
  font-size: 4px;
  color: #aaa;
}
.val {
  white-space: nowrap;
  color: #8a8a8a;
  font-size: 5px;
}
.val b {
  color: #3585d6;
  font-weight: 400;
}
.val.muted {
  color: #555;
}
.char-stroke {
  height: 14px;
  display: flex;
  align-items: center;
  padding-left: 1px;
  border-bottom: 1px solid #181818;
  color: #8a8a8a;
  flex: none;
}
.char-stroke svg {
  color: #aaa;
}
.char-stroke span:first-of-type {
  margin-left: 3px;
  width: 22px;
}
.stroke-select {
  width: 46px;
  height: 7px;
  margin-left: 5px;
  background: #181818;
  display: flex;
  justify-content: flex-end;
  align-items: center;
}
.stroke-select svg {
  width: 6px;
  height: 6px;
}
.char-grid-2 {
  height: 24px;
}
.char-styles {
  height: 16px;
  display: flex;
  gap: 5px;
  align-items: center;
  padding-left: 14px;
  border-bottom: 1px solid #181818;
  font: 700 6px/8px "Liberation Serif", serif;
  color: #aaa;
  flex: none;
}
.char-styles em {
  font-style: italic;
  margin-right: 2px;
}

/* timeline */
.timeline {
  flex: 1;
  margin-top: 1px;
  background: #232323;
  display: flex;
  flex-direction: column;
  min-height: 0;
}
.tl-tabs {
  height: 12px;
  display: flex;
  align-items: center;
  padding-left: 4px;
  gap: 4px;
  flex: none;
}
.tl-name {
  margin-left: 2px;
}
.tl-tabs .tab-menu {
  margin-left: 0;
}
.tl-body {
  height: 156px;
  display: flex;
  overflow: hidden;
  flex: none;
}
.tl-left {
  width: 265px;
  flex: none;
}
.tl-time {
  height: 17px;
  display: flex;
  align-items: center;
  color: #b0b0b0;
  border-top: 1px solid #1a1a1a;
  padding-bottom: 2px;
}
.time-box {
  width: 56px;
  padding-left: 3px;
}
.time-code {
  color: #2f8ae6;
  font: 700 7px/7px "Liberation Sans", sans-serif;
  padding-left: 8px;
}
.time-fps {
  color: #22598f;
  font: 4.200px/5px "Liberation Mono", monospace;
  white-space: nowrap;
}
.tl-search {
  width: 117px;
  height: 8px;
  background: #161616;
  display: flex;
  align-items: center;
  padding-left: 3px;
  margin-right: 8px;
}
.tl-time svg {
  width: 8px;
  height: 8px;
}
.tl-time .tt-2, .tl-time .tt-3 {
  margin-left: 7px;
}
.tl-time .tt-4, .tl-time .tt-5 {
  margin-left: 4px;
}
.tl-time .tt-6 {
  margin-left: 7px;
}
.col-head {
  height: 9px;
  background: #2f2f2f;
  display: flex;
  align-items: center;
  color: #999;
  padding-left: 2px;
}
.ch-i {
  width: 6px;
  height: 6px;
}
.ch-tag {
  width: 6px;
  height: 6px;
  margin-left: 13px;
}
.ch-hash {
  margin-left: 5px;
  width: 16px;
}
.ch-name {
  width: 80px;
}
.ch-s {
  width: 6.500px;
  height: 6.500px;
}
.ch-fx {
  width: 6px;
  font-size: 5px;
}
.ch-parent {
  margin-left: 11px;
  white-space: nowrap;
}
.layer {
  height: 9px;
  display: flex;
  align-items: center;
  background: #292929;
  border-bottom: 1px solid #1e1e1e;
  color: #8e8e8e;
  font-size: 5px;
}
.l-eye {
  width: 7px;
  height: 7px;
  margin: 0 7.500px 0 1.500px;
  color: #c4c4c4;
}
.l-box {
  width: 6px;
  height: 8px;
  margin-right: 1px;
  background: #222;
  flex: none;
}
.l-box-a {
  margin-left: 14px;
}
.l-arrow {
  width: 7px;
  height: 7px;
  margin: 0 1px 0 1px;
  color: #888;
}
.l-red, .l-lilac {
  width: 7px;
  height: 7px;
  flex: none;
}
.l-red {
  background: #c43c3c;
}
.l-lilac {
  background: #a9a6d8;
}
.l-num {
  width: 10px;
  text-align: center;
  margin-left: 0;
}
.l-type {
  width: 7px;
  height: 7px;
  margin: 0 0 0 5px;
  color: #b0b0b0;
}
.l-png {
  width: 9px;
  height: 9px;
  margin: 0 -1px 0 4px;
}
.l-name {
  width: 72px;
  padding-left: 3px;
  white-space: nowrap;
  overflow: hidden;
}
.l-name-59 {
  padding-left: 23px;
}
.l-s {
  width: 7px;
  height: 7px;
  color: #b0b0b0;
}
.l-spiral {
  width: 7px;
  height: 7px;
  margin: 0 1.500px 0 7px;
  color: #777;
}
.l-select {
  width: 40px;
  height: 8px;
  background: #1b1b1b;
  color: #999;
  padding: 0 2px 0 3px;
  display: flex;
  align-items: center;
  justify-content: space-between;
  font-size: 5.500px;
}
.l-select svg {
  width: 6px;
  height: 6px;
  color: #888;
}
.tl-right {
  width: 589px;
  flex: none;
  position: relative;
  padding-left: 3px;
}
.ruler {
  height: 17px;
  border-top: 1px solid #1a1a1a;
  padding-top: 2px;
}
.ruler-bar {
  height: 3px;
  width: 585px;
  background: #6a6a6a;
  border-left: 2px solid #2f8ae6;
  border-right: 2px solid #2f8ae6;
}
.ruler-labels {
  display: flex;
  justify-content: space-between;
  width: 590px;
  margin: 2px 0 0 -2px;
  font: 4.500px/7px "Liberation Sans", sans-serif;
  color: #888;
}
.work-bar {
  height: 7px;
  width: 585px;
  background: #6c6c6c;
  border-left: 2px solid #2f8ae6;
}
.green-bar {
  height: 2px;
  width: 585px;
  background: #0f9a1f;
}
.tracks {
  width: 585px;
  background: #383838;
}
.track {
  height: 8px;
  margin-bottom: 1px;
}
.track.red {
  background: #7b3b3c;
}
.track.gray {
  background: #75757f;
}
.playhead {
  position: absolute;
  left: 64px;
  top: 4px;
  bottom: 0;
  width: 1px;
  background: #2f7fcd;
}
.playhead-cap {
  position: absolute;
  left: -2px;
  top: 4px;
  width: 5px;
  height: 5px;
  background: #3e9bf2;
  border-radius: 1px 1px 2px 2px;
}
.tl-scroll {
  flex: 1;
  padding-top: 16px;
  position: relative;
  display: flex;
  flex-direction: column;
  align-items: center;
  background: #1c1c1c;
}
.scroll-top {
  width: 6px;
  height: 7px;
  background: #b0b0b0;
  margin-bottom: 2px;
}
.scroll-top2 {
  width: 6px;
  height: 5px;
  border-radius: 50%;
  background: #bbb;
  margin-bottom: 1px;
}
.scroll-thumb {
  width: 7px;
  height: 104px;
  border-radius: 3px;
  background: #2f2f2f;
}
.tl-foot {
  flex: 1;
  background: #1e1e1e;
  display: flex;
  align-items: center;
  padding-left: 3px;
  gap: 2px;
  color: #aaa;
  position: relative;
}
.tl-foot svg {
  width: 6px;
  height: 6px;
}
.tl-foot .blue {
  color: #2f8ae6;
}
.mode-toggle {
  position: absolute;
  left: 144px;
  top: 1px;
  width: 60px;
  height: 7px;
  line-height: 7px;
  background: #191919;
  color: #888;
  text-align: center;
}
.zoom-slider {
  position: absolute;
  left: 268px;
  top: 4px;
  width: 36px;
  height: 1px;
  background: #666;
}
.zoom-knob {
  position: absolute;
  left: 8px;
  top: -2px;
  width: 5px;
  height: 5px;
  border-radius: 50%;
  border: 1px solid #aaa;
  background: #222;
}
.tl-thumb {
  position: absolute;
  left: 264px;
  bottom: 0;
  width: 22px;
  height: 4px;
  background: #4a4a4a;
}
```
